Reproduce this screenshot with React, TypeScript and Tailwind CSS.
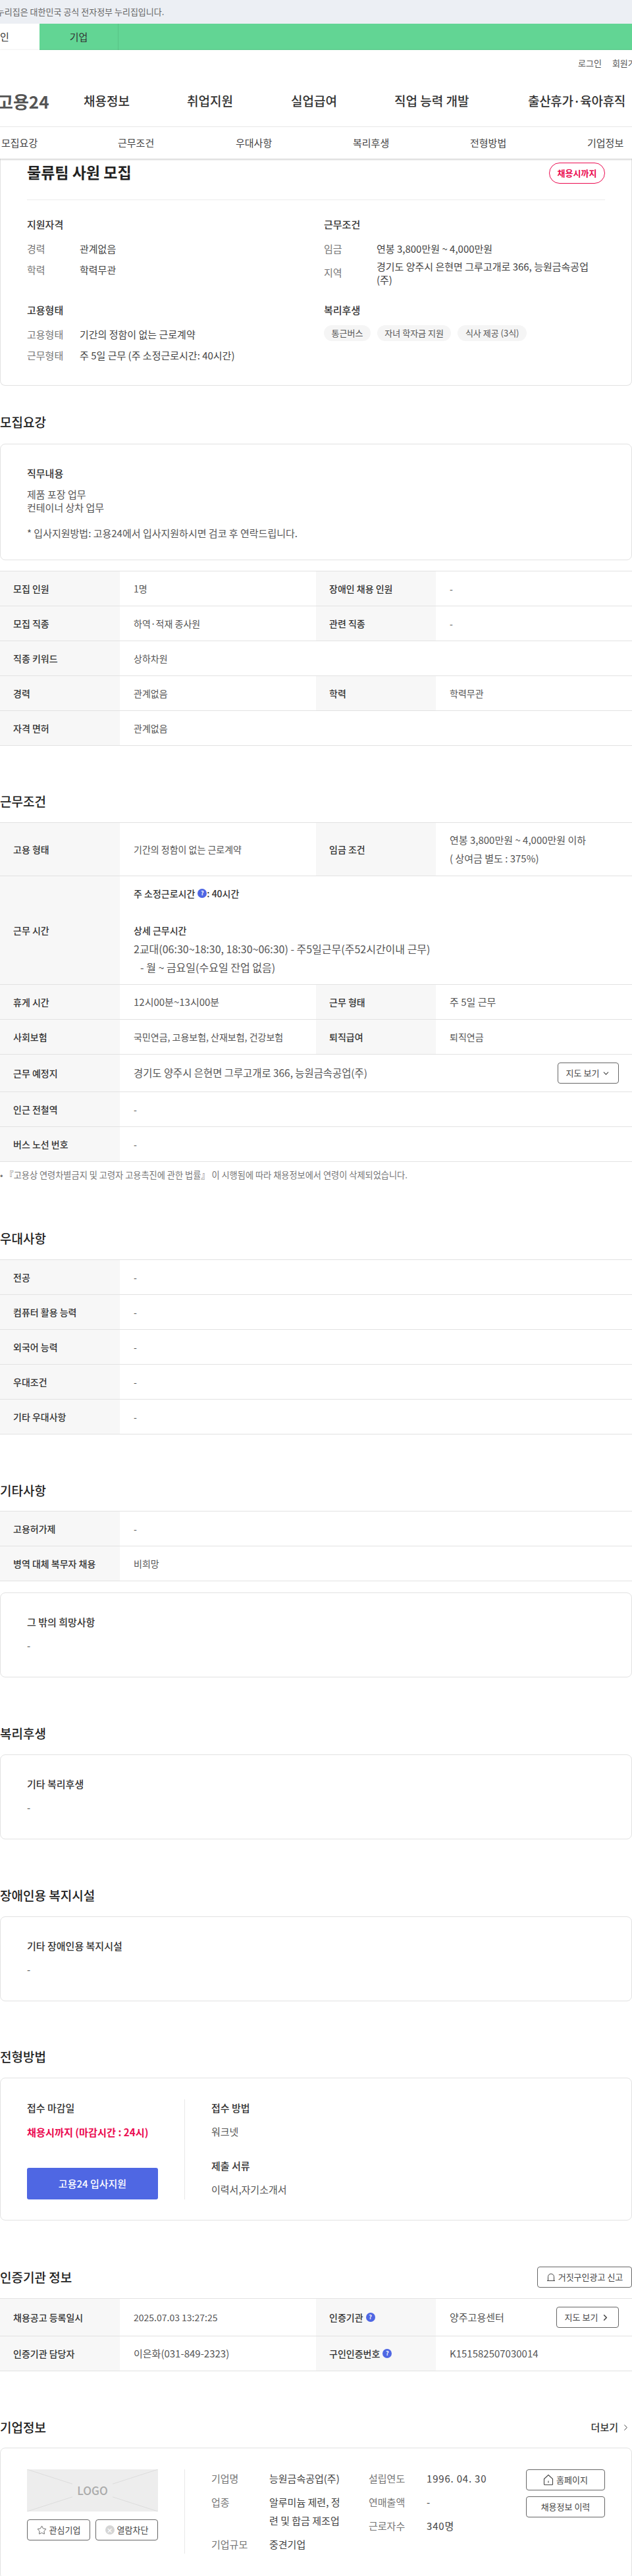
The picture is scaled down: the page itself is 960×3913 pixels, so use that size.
import { ReactNode } from 'react';
import { ChevronDown, ChevronRight, Star } from 'lucide-react';

const FONT = "font-['Noto_Sans_CJK_KR','Noto_Sans',sans-serif]";

function Heading({ children, className = '' }: { children: ReactNode; className?: string }) {
  return <h2 className={`h-[26px] text-[19px] leading-[26px] font-medium text-[#222] ${className}`}>{children}</h2>;
}

function Th({ children }: { children: ReactNode }) {
  return <div className="flex w-[182px] shrink-0 items-center gap-1 bg-[#f7f7f7] pl-5 text-[14px] font-medium text-[#333]">{children}</div>;
}

function Td({ children, wide }: { children?: ReactNode; wide?: boolean }) {
  return <div className={`flex min-h-[52px] flex-col justify-center py-3 pl-[21px] text-[14px] leading-7 text-[#555] ${wide ? 'flex-1' : 'w-[298px] shrink-0'}`}>{children}</div>;
}

function Row({ children }: { children: ReactNode }) {
  return <div className="flex border-b border-[#e2e2e2]">{children}</div>;
}

function Table({ children }: { children: ReactNode }) {
  return <div className="border-t border-[#e2e2e2]">{children}</div>;
}

function Question() {
  return <span className="inline-flex h-[14px] w-[14px] items-center justify-center rounded-full bg-[#4f67e3] text-[9px] font-bold text-white">?</span>;
}

function TextCard({ title, children, className = '' }: { title: string; children: ReactNode; className?: string }) {
  return (
    <div className={`h-[129px] rounded-lg border border-[#e2e2e2] px-10 pt-[33px] ${className}`}>
      <p className="text-[15px] leading-[22px] font-medium text-[#333]">{title}</p>
      <p className="mt-[15px] text-[15px] leading-[20px] text-[#555]">{children}</p>
    </div>
  );
}

function OutlineBtn({ children, className = '' }: { children: ReactNode; className?: string }) {
  return <button className={`flex h-[32px] items-center justify-center gap-1 rounded-[4px] border border-[#666] bg-white text-[13px] text-[#444] ${className}`}>{children}</button>;
}

function InfoLine({ label, children, className = '' }: { label: string; children: ReactNode; className?: string }) {
  return (
    <div className={`flex min-h-[32px] items-center text-[15px] ${className}`}>
      <span className="w-[80px] shrink-0 text-[#767676]">{label}</span>
      <span className="max-w-[340px] leading-[19.5px] text-[#444]">{children}</span>
    </div>
  );
}

function CompanyLine({ label, children, className = '' }: { label: string; children: ReactNode; className?: string }) {
  return (
    <div className={`flex text-[15px] leading-7 ${className}`}>
      <span className="w-[88px] shrink-0 text-[#767676]">{label}</span>
      <span className="w-[114px] break-all text-[#444]">{children}</span>
    </div>
  );
}

const PlainRows = ({ rows }: { rows: [string, string][] }) => (
  <>
    {rows.map(([k, v]) => (
      <Row key={k}>
        <Th>{k}</Th>
        <Td wide>{v}</Td>
      </Row>
    ))}
  </>
);

export default function App() {
  return (
    <div className={`h-[3913px] w-[960px] overflow-hidden bg-white ${FONT}`}>
      {/* gov banner */}
      <div className="h-[36px] overflow-hidden bg-[#eceff4] text-[13px] leading-[36px] text-[#666]">
        <p className="-ml-[20px] whitespace-nowrap">이 누리집은 대한민국 공식 전자정부 누리집입니다.</p>
      </div>
      <div className="flex h-[40px] bg-[#62d594] text-[15px] leading-[40px] text-[#333]">
        <div className="-ml-[60px] w-[120px] bg-white text-center">개인</div>
        <div className="w-[120px] border-r border-[#58c386] text-center">기업</div>
      </div>

      <header className="relative z-10 bg-white shadow-[0_1px_3px_rgba(0,0,0,0.25)]">
        <div className="flex h-[40px] items-center gap-[16px] pl-[878px] text-[13px] whitespace-nowrap text-[#555]">
          <span>로그인</span>
          <span>회원가입</span>
        </div>
        <div className="flex h-[77px] items-center border-b border-[#e8e8e8] pb-[2px] text-[19px] font-medium whitespace-nowrap text-[#333]">
          <span className="-ml-[4px] w-[131px] shrink-0 text-[26px] font-bold text-[#555]">고용24</span>
          <span className="w-[157px] shrink-0">채용정보</span>
          <span className="w-[158px] shrink-0">취업지원</span>
          <span className="w-[157px] shrink-0">실업급여</span>
          <span className="w-[203px] shrink-0">직업 능력 개발</span>
          <span className="tracking-[-0.3px]">출산휴가·육아휴직</span>
        </div>
        <nav className="flex h-[48px] items-center pl-[2px] text-[15px] whitespace-nowrap text-[#444]">
          <span className="w-[177px]">모집요강</span>
          <span className="w-[179px]">근무조건</span>
          <span className="w-[178px]">우대사항</span>
          <span className="w-[178px]">복리후생</span>
          <span className="w-[178px]">전형방법</span>
          <span>기업정보</span>
        </nav>
      </header>

      <main>
        {/* summary */}
        <section className="h-[345px] rounded-b-lg border border-t-0 border-[#e2e2e2] px-10 pt-[6px]">
          <div className="flex h-[32px] items-start justify-between">
            <h1 className="text-[23px] leading-[28px] font-bold text-[#222]">물류팀 사원 모집</h1>
            <span className="flex h-[32px] w-[85px] items-center justify-center rounded-full border border-[#eb0a50] text-[13px] font-bold text-[#eb0a50]">채용시까지</span>
          </div>
          <div className="mt-[24px] grid grid-cols-[451px_1fr] grid-rows-[130px_auto] border-t border-[#ececec] pt-[26px]">
            <div>
              <h3 className="mb-[10px] text-[15px] leading-[22px] font-medium text-[#333]">지원자격</h3>
              <InfoLine label="경력">관계없음</InfoLine>
              <InfoLine label="학력">학력무관</InfoLine>
            </div>
            <div>
              <h3 className="mb-[10px] text-[15px] leading-[22px] font-medium text-[#333]">근무조건</h3>
              <InfoLine label="임금">연봉 3,800만원 ~ 4,000만원</InfoLine>
              <InfoLine label="지역" className="pt-[1px]">경기도 양주시 은현면 그루고개로 366, 능원금속공업(주)</InfoLine>
            </div>
            <div>
              <h3 className="mb-[10px] text-[15px] leading-[22px] font-medium text-[#333]">고용형태</h3>
              <InfoLine label="고용형태">기간의 정함이 없는 근로계약</InfoLine>
              <InfoLine label="근무형태">주 5일 근무 (주 소정근로시간: 40시간)</InfoLine>
            </div>
            <div>
              <h3 className="mb-[12px] text-[15px] leading-[22px] font-medium text-[#333]">복리후생</h3>
              <div className="flex gap-[10px] text-[13px] leading-[24px] text-[#555]">
                <span className="rounded-full bg-[#f5f5f5] px-[11.5px]">통근버스</span>
                <span className="rounded-full bg-[#f5f5f5] px-[11.5px]">자녀 학자금 지원</span>
                <span className="rounded-full bg-[#f5f5f5] px-[11.5px]">식사 제공 (3식)</span>
              </div>
            </div>
          </div>
        </section>

        {/* 모집요강 */}
        <Heading className="mt-[42px]">모집요강</Heading>
        <div className="mt-[20px] h-[177px] rounded-lg border border-[#e2e2e2] px-10 pt-[33px]">
          <p className="text-[15px] leading-[22px] font-medium text-[#333]">직무내용</p>
          <p className="mt-[11px] text-[15px] leading-[19.5px] text-[#555]">
            제품 포장 업무
            <br />
            컨테이너 상차 업무
            <br />
            <br />* 입사지원방법: 고용24에서 입사지원하시면 검코 후 연락드립니다.
          </p>
        </div>
        <div className="mt-[16px]">
          <Table>
            <Row><Th>모집 인원</Th><Td>1명</Td><Th>장애인 채용 인원</Th><Td wide>-</Td></Row>
            <Row><Th>모집 직종</Th><Td>하역·적재 종사원</Td><Th>관련 직종</Th><Td wide>-</Td></Row>
            <Row><Th>직종 키워드</Th><Td wide>상하차원</Td></Row>
            <Row><Th>경력</Th><Td>관계없음</Td><Th>학력</Th><Td wide>학력무관</Td></Row>
            <Row><Th>자격 면허</Th><Td wide>관계없음</Td></Row>
          </Table>
        </div>

        {/* 근무조건 */}
        <Heading className="mt-[71px] mb-[19px]">근무조건</Heading>
        <Table>
          <Row>
            <Th>고용 형태</Th>
            <Td>기간의 정함이 없는 근로계약</Td>
            <Th>임금 조건</Th>
            <Td wide>
              <span className="text-[15px]">연봉 3,800만원 ~ 4,000만원 이하</span>
              <span className="text-[15px]">( 상여금 별도 : 375%)</span>
            </Td>
          </Row>
          <Row>
            <Th>근무 시간</Th>
            <Td wide>
              <span className="flex items-center gap-1 font-medium text-[#333]">주 소정근로시간 <Question /><span className="-ml-1">: 40시간</span></span>
              <span>&nbsp;</span>
              <span className="font-medium text-[#333]">상세 근무시간</span>
              <span className="text-[16px]">2교대(06:30~18:30, 18:30~06:30) - 주5일근무(주52시간이내 근무)</span>
              <span className="pl-[10px] text-[16px]">- 월 ~ 금요일(수요일 잔업 없음)</span>
            </Td>
          </Row>
          <Row>
            <Th>휴게 시간</Th>
            <Td><span className="text-[15px]">12시00분~13시00분</span></Td>
            <Th>근무 형태</Th>
            <Td wide><span className="text-[15px]">주 5일 근무</span></Td>
          </Row>
          <Row><Th>사회보험</Th><Td>국민연금, 고용보험, 산재보험, 건강보험</Td><Th>퇴직급여</Th><Td wide>퇴직연금</Td></Row>
          <Row>
            <Th>근무 예정지</Th>
            <div className="flex flex-1 items-center justify-between py-3 pr-5 pl-[21px] text-[15.4px] text-[#555]">
              <span>경기도 양주시 은현면 그루고개로 366, 능원금속공업(주)</span>
              <OutlineBtn className="w-[93px]">지도 보기 <ChevronDown size={13} /></OutlineBtn>
            </div>
          </Row>
          <Row><Th>인근 전철역</Th><Td wide>-</Td></Row>
          <Row><Th>버스 노선 번호</Th><Td wide>-</Td></Row>
        </Table>
        <p className="mt-[10px] text-[13.2px] leading-[20px] whitespace-nowrap text-[#777]">• 『고용상 연령차별금지 및 고령자 고용촉진에 관한 법률』 이 시행됨에 따라 채용정보에서 연령이 삭제되었습니다.</p>

        {/* 우대사항 */}
        <Heading className="mt-[73px] mb-[19px]">우대사항</Heading>
        <Table>
          <PlainRows rows={[['전공', '-'], ['컴퓨터 활용 능력', '-'], ['외국어 능력', '-'], ['우대조건', '-'], ['기타 우대사항', '-']]} />
        </Table>

        {/* 기타사항 */}
        <Heading className="mt-[72px] mb-[18px]">기타사항</Heading>
        <Table>
          <PlainRows rows={[['고용허가제', '-'], ['병역 대체 복무자 채용', '비희망']]} />
        </Table>
        <TextCard title="그 밖의 희망사항" className="mt-[17px]">-</TextCard>

        <Heading className="mt-[72px] mb-[19px]">복리후생</Heading>
        <TextCard title="기타 복리후생">-</TextCard>

        <Heading className="mt-[72px] mb-[19px]">장애인용 복지시설</Heading>
        <TextCard title="기타 장애인용 복지시설">-</TextCard>

        {/* 전형방법 */}
        <Heading className="mt-[71px] mb-[19px]">전형방법</Heading>
        <div className="h-[217px] rounded-lg border border-[#e2e2e2] pt-[32px] pl-10">
          <div className="flex h-[152px]">
            <div className="flex w-[240px] flex-col justify-between border-r border-[#e8e8e8] pr-10">
              <div>
                <p className="text-[15px] leading-[26px] font-medium text-[#333]">접수 마감일</p>
                <p className="mt-[10px] text-[15.2px] leading-[26px] font-bold whitespace-nowrap text-[#eb0a50]">채용시까지 (마감시간 : 24시)</p>
              </div>
              <button className="h-[48px] rounded-[3px] bg-[#4f67e3] text-[15px] font-medium text-white">고용24 입사지원</button>
            </div>
            <div className="pl-10">
              <p className="text-[15px] leading-[26px] font-medium text-[#333]">접수 방법</p>
              <p className="mt-[10px] text-[15px] leading-[26px] text-[#555]">워크넷</p>
              <p className="mt-[26px] text-[15px] leading-[26px] font-medium text-[#333]">제출 서류</p>
              <p className="mt-[10px] text-[15px] leading-[26px] text-[#555]">이력서,자기소개서</p>
            </div>
          </div>
        </div>

        {/* 인증기관 정보 */}
        <div className="mt-[70px] mb-[16px] flex h-[32px] items-center justify-between">
          <Heading>인증기관 정보</Heading>
          <OutlineBtn className="w-[144px]">
            <svg width="14" height="14" viewBox="0 0 14 14" fill="none" stroke="#444" strokeWidth="1">
              <path d="M2.5 12V6.5a4.5 4.5 0 0 1 9 0V12M1 12.5h12" />
            </svg>
            거짓구인광고 신고
          </OutlineBtn>
        </div>
        <Table>
          <Row>
            <Th>채용공고 등록일시</Th>
            <Td>2025.07.03 13:27:25</Td>
            <Th>인증기관 <Question /></Th>
            <div className="flex flex-1 items-center justify-between py-3 pr-5 pl-[21px] text-[15px] text-[#555]">
              <span>양주고용센터</span>
              <OutlineBtn className="w-[95px]">지도 보기 <ChevronRight size={15} strokeWidth={2.5} /></OutlineBtn>
            </div>
          </Row>
          <Row>
            <Th>인증기관 담당자</Th>
            <Td><span className="text-[15px]">이은화(031-849-2323)</span></Td>
            <Th>구인인증번호 <Question /></Th>
            <Td wide><span className="text-[15px]">K151582507030014</span></Td>
          </Row>
        </Table>

        {/* 기업정보 */}
        <div className="mt-[72px] mb-[18px] flex h-[26px] items-center justify-between">
          <Heading>기업정보</Heading>
          <span className="flex items-center gap-[4px] pr-[2px] text-[15px] font-medium text-[#333]">더보기 <ChevronRight size={15} strokeWidth={1.5} /></span>
        </div>
        <div className="h-[200px] rounded-lg border border-[#e2e2e2] pt-[32px] pl-10">
          <div className="flex h-[128px]">
            <div className="w-[240px] border-r border-[#e8e8e8] pr-10">
              <div className="relative flex h-[64px] items-center justify-center bg-[#ededed]">
                <svg className="absolute inset-0 h-full w-full" viewBox="0 0 199 64" preserveAspectRatio="none" stroke="#dcdcdc" strokeWidth="1">
                  <path d="M0 0L199 64M199 0L0 64" />
                </svg>
                <span className="relative bg-[#ededed] px-[7px] text-[17px] font-medium text-[#aaa]">LOGO</span>
              </div>
              <div className="mt-[12px] flex justify-between">
                <OutlineBtn className="w-[96px]"><Star size={15} strokeWidth={1.3} />관심기업</OutlineBtn>
                <OutlineBtn className="w-[95px]">
                  <span className="flex h-[14px] w-[14px] items-center justify-center rounded-full bg-[#d5d5d5] text-[11px] leading-none text-white">✕</span>
                  열람차단
                </OutlineBtn>
              </div>
            </div>
            <div className="w-[279px] pl-10">
              <CompanyLine label="기업명">능원금속공업(주)</CompanyLine>
              <CompanyLine label="업종" className="mt-[8px]">알루미늄 제련, 정련 및 합금 제조업</CompanyLine>
              <CompanyLine label="기업규모" className="mt-[8px]">중견기업</CompanyLine>
            </div>
            <div className="w-[239px]">
              <CompanyLine label="설립연도"><span className="tracking-[0.8px]">1996. 04. 30</span></CompanyLine>
              <CompanyLine label="연매출액" className="mt-[8px]">-</CompanyLine>
              <CompanyLine label="근로자수" className="mt-[8px]"><span className="tracking-[0.8px]">340명</span></CompanyLine>
            </div>
            <div className="flex w-[120px] flex-col gap-[9px]">
              <OutlineBtn>
                <svg width="16" height="18" viewBox="0 0 16 18" fill="none" stroke="#444" strokeWidth="1.1">
                  <path d="M1.5 7.5L8 1.5l6.5 6V15.5a1 1 0 0 1-1 1h-11a1 1 0 0 1-1-1Z" />
                  <path d="M8 10.5v3" />
                </svg>
                홈페이지
              </OutlineBtn>
              <OutlineBtn>채용정보 이력</OutlineBtn>
            </div>
          </div>
        </div>
      </main>
    </div>
  );
}
